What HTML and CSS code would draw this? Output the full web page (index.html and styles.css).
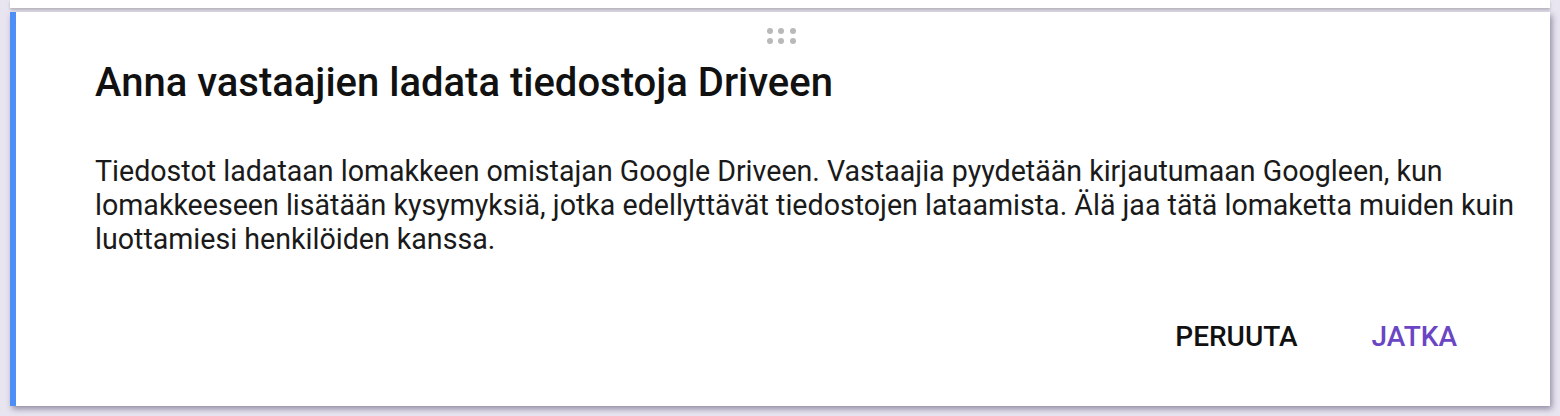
FILE: index.html
```html
<!DOCTYPE html>
<html lang="fi">
<head>
    <meta charset="UTF-8">
    <meta name="viewport" content="width=device-width, initial-scale=1.0">
    <title>Tiedostojen lataus</title>
    <link rel="stylesheet" href="styles.css">
</head>
<body>
    <div class="top-card"></div>

    <div class="dialog">
        <div class="drag-handle">
            <span></span><span></span><span></span>
            <span></span><span></span><span></span>
        </div>

        <h1>Anna vastaajien ladata tiedostoja Driveen</h1>

        <p class="message">Tiedostot ladataan lomakkeen omistajan Google Driveen. Vastaajia pyydetään kirjautumaan Googleen, kun lomakkeeseen lisätään kysymyksiä, jotka edellyttävät tiedostojen lataamista. Älä jaa tätä lomaketta muiden kuin luottamiesi henkilöiden kanssa.</p>

        <div class="actions">
            <button class="cancel">PERUUTA</button>
            <button class="continue">JATKA</button>
        </div>
    </div>
</body>
</html>
```

FILE: styles.css
```css
* {
    margin: 0;
    padding: 0;
    box-sizing: border-box;
}

body {
    font-family: Roboto, "Liberation Sans", sans-serif;
    background-color: #e9e5f0;
    padding: 0 10px;
    height: 416px;
    overflow: hidden;
}

.top-card {
    height: 8px;
    background-color: white;
    box-shadow: 0 2px 3px rgba(0, 0, 0, 0.22);
    margin-bottom: 4px;
}

.dialog {
    height: 394px;
    background-color: white;
    border-left: 6px solid #4d8ef7;
    box-shadow: 2px 3px 6px rgba(40, 30, 70, 0.45);
    padding: 0 10px 0 79px;
    display: flex;
    flex-direction: column;
}

.drag-handle {
    display: grid;
    grid-template-columns: repeat(3, 6px);
    gap: 4px 5.5px;
    justify-content: center;
    margin: 16px 0 0 -73px;
}

.drag-handle span {
    width: 6px;
    height: 6px;
    border-radius: 50%;
    background-color: #b9b9b9;
}

h1 {
    font-size: 40px;
    font-weight: 500;
    line-height: 44px;
    color: #111;
    margin-top: 17px;
}

.message {
    width: 1443px;
    font-size: 28.6px;
    line-height: 34px;
    color: #1a1a1a;
    margin-top: 49px;
}

.actions {
    display: flex;
    justify-content: flex-end;
    gap: 74px;
    margin: auto 83px 53px 0;
}

.actions button {
    font-family: Roboto, "Liberation Sans", sans-serif;
    font-size: 28px;
    font-weight: 500;
    line-height: 32px;
    background: none;
    border: none;
    cursor: pointer;
}

.cancel {
    color: #111;
}

.continue {
    color: #6b45c3;
}
```
